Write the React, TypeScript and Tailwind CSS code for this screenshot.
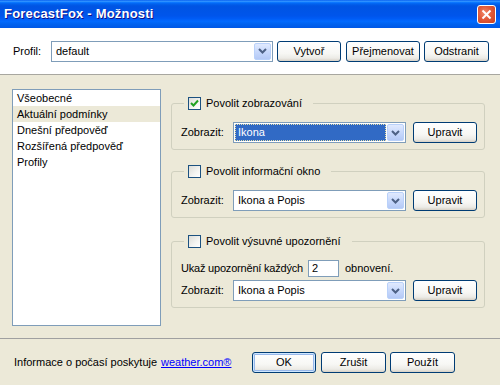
import React from "react";

function Chevron() {
  return (
    <svg width="9" height="6" viewBox="0 0 9 6">
      <polyline points="1,1 4.5,4.5 8,1" fill="none" stroke="#4D6185" strokeWidth="2" />
    </svg>
  );
}

function DropArrow() {
  return (
    <div className="w-[17px] h-full flex items-center justify-center rounded-[2px] border border-[#B9D1FA] bg-[linear-gradient(180deg,#E1EAFE_0%,#C8D9FC_50%,#B4C9F6_100%)]">
      <Chevron />
    </div>
  );
}

function XPSelect({ value, className, focused }: { value: string; className: string; focused?: boolean }) {
  return (
    <div className={`flex h-[21px] border border-[#7F9DB9] bg-white p-[1px] ${className}`}>
      {focused ? (
        <div className="flex-1 flex items-center bg-[#316AC5] text-white border border-dotted border-[#E8E2A8] pl-[2px] mr-[1px]">
          {value}
        </div>
      ) : (
        <div className="flex-1 flex items-center pl-[3px]">{value}</div>
      )}
      <DropArrow />
    </div>
  );
}

function XPButton({ children, className, def }: { children: React.ReactNode; className: string; def?: boolean }) {
  return (
    <div
      className={`h-[21px] flex items-center justify-center rounded-[3px] border border-[#003C74] bg-[linear-gradient(180deg,#FFFFFF_0%,#F7F7F4_60%,#ECEBE6_85%,#D6D0C5_100%)] ${
        def ? "shadow-[inset_0_0_0_1px_#CEE7FF,inset_0_0_0_2px_#98B8EA]" : ""
      } ${className}`}
    >
      {children}
    </div>
  );
}

function Checkbox({ checked }: { checked?: boolean }) {
  return (
    <div className="w-[13px] h-[13px] border border-[#1C5180] bg-[linear-gradient(135deg,#DCDCD7_0%,#F4F4F1_60%,#FFFFFF_100%)] flex items-center justify-center">
      {checked && (
        <svg width="9" height="9" viewBox="0 0 9 9">
          <polyline points="1,4 3.5,6.5 8,1.5" fill="none" stroke="#21A121" strokeWidth="2" />
        </svg>
      )}
    </div>
  );
}

function Group({ title, checked, children, className }: { title: string; checked?: boolean; children: React.ReactNode; className: string }) {
  return (
    <fieldset className={`border border-[#D0D0BF] rounded-[3px] w-[314px] pl-[9px] pr-[7px] pb-[6px] ${className}`}>
      <legend className="ml-[3px] pl-[4px] pr-[11px] h-[15px]">
        <div className="flex items-center h-[15px] gap-[5px]">
          <Checkbox checked={checked} />
          <span>{title}</span>
        </div>
      </legend>
      {children}
    </fieldset>
  );
}

function ShowRow({ value, focused, className }: { value: string; focused?: boolean; className: string }) {
  return (
    <div className={`flex items-center ${className}`}>
      <span className="w-[52px]">Zobrazit:</span>
      <XPSelect value={value} focused={focused} className="w-[173px]" />
      <XPButton className="w-[64px] ml-[7px]">Upravit</XPButton>
    </div>
  );
}

export default function App() {
  const items = ["Všeobecné", "Aktuální podmínky", "Dnešní předpověď", "Rozšířená předpověď", "Profily"];
  return (
    <div className="w-[500px] h-[385px] bg-[#ECE9D8] flex flex-col text-[11px] text-black overflow-hidden [font-family:'Liberation_Sans',Arial,sans-serif]">
      {/* Title bar */}
      <div className="h-[28px] flex items-center justify-between pl-[4px] pr-[4px] bg-[linear-gradient(180deg,#0058EE_0%,#3593FF_4%,#288EFF_6%,#127DFF_8%,#036FFC_10%,#0262EE_14%,#0057E5_20%,#0054E3_24%,#0055EB_56%,#005BF5_66%,#026AFE_76%,#0062EF_86%,#0058E6_100%)]">
        <span className="text-white font-bold text-[13px] [text-shadow:1px_1px_0_#0F1089] tracking-[0.2px]">
          ForecastFox - Možnosti
        </span>
        <div className="w-[19px] h-[19px] mt-[0px] rounded-[3px] border border-white bg-[radial-gradient(circle_at_40%_40%,#F28B6B_0%,#E25A3A_45%,#C8401F_100%)] flex items-center justify-center">
          <svg width="11" height="11" viewBox="0 0 11 11">
            <line x1="1.5" y1="1.5" x2="9.5" y2="9.5" stroke="white" strokeWidth="2" />
            <line x1="9.5" y1="1.5" x2="1.5" y2="9.5" stroke="white" strokeWidth="2" />
          </svg>
        </div>
      </div>

      {/* Header */}
      <div className="h-[47px] bg-white border-b border-[#A8A7A0] flex items-center pl-[13px]">
        <span className="w-[38px]">Profil:</span>
        <XPSelect value="default" className="w-[222px]" />
        <XPButton className="w-[64px] ml-[4px]">Vytvoř</XPButton>
        <XPButton className="w-[74px] ml-[5px]">Přejmenovat</XPButton>
        <XPButton className="w-[65px] ml-[4px]">Odstranit</XPButton>
      </div>

      {/* Main */}
      <div className="h-[263px] flex pl-[12px] pt-[14px]">
        <div className="w-[149px] h-[237px] border border-[#7F9DB9] bg-white">
          {items.map((it, i) => (
            <div key={it} className={`h-[16px] flex items-center pl-[4px] ${i === 1 ? "bg-[#ECE9D8]" : ""}`}>
              {it}
            </div>
          ))}
        </div>
        <div className="ml-[10px] pt-[7px] flex flex-col">
          <Group title="Povolit zobrazování" checked className="">
            <ShowRow value="Ikona" focused className="mt-[11px]" />
          </Group>
          <Group title="Povolit informační okno" className="mt-[14px]">
            <ShowRow value="Ikona a Popis" className="mt-[11px]" />
          </Group>
          <Group title="Povolit výsuvné upozornění" className="mt-[16px]">
            <div className="flex items-center mt-[10px] h-[18px]">
              <span className="w-[127px] whitespace-nowrap tracking-[-0.2px]">Ukaž upozornění každých</span>
              <div className="w-[31px] h-[17px] border border-[#7F9DB9] bg-white flex items-center pl-[3px]">2</div>
              <span className="ml-[6px]">obnovení.</span>
            </div>
            <ShowRow value="Ikona a Popis" className="mt-[3px]" />
          </Group>
        </div>
      </div>

      {/* Footer */}
      <div className="flex-1 border-t border-[#A0A0A0] flex items-center pl-[14px]">
        <span className="w-[147px] whitespace-nowrap">Informace o počasí poskytuje</span>
        <span className="text-[#0000FF] underline w-[91px]">weather.com®</span>
        <XPButton def className="w-[64px]">OK</XPButton>
        <XPButton className="w-[65px] ml-[5px]">Zrušit</XPButton>
        <XPButton className="w-[65px] ml-[4px]">Použít</XPButton>
      </div>
    </div>
  );
}
